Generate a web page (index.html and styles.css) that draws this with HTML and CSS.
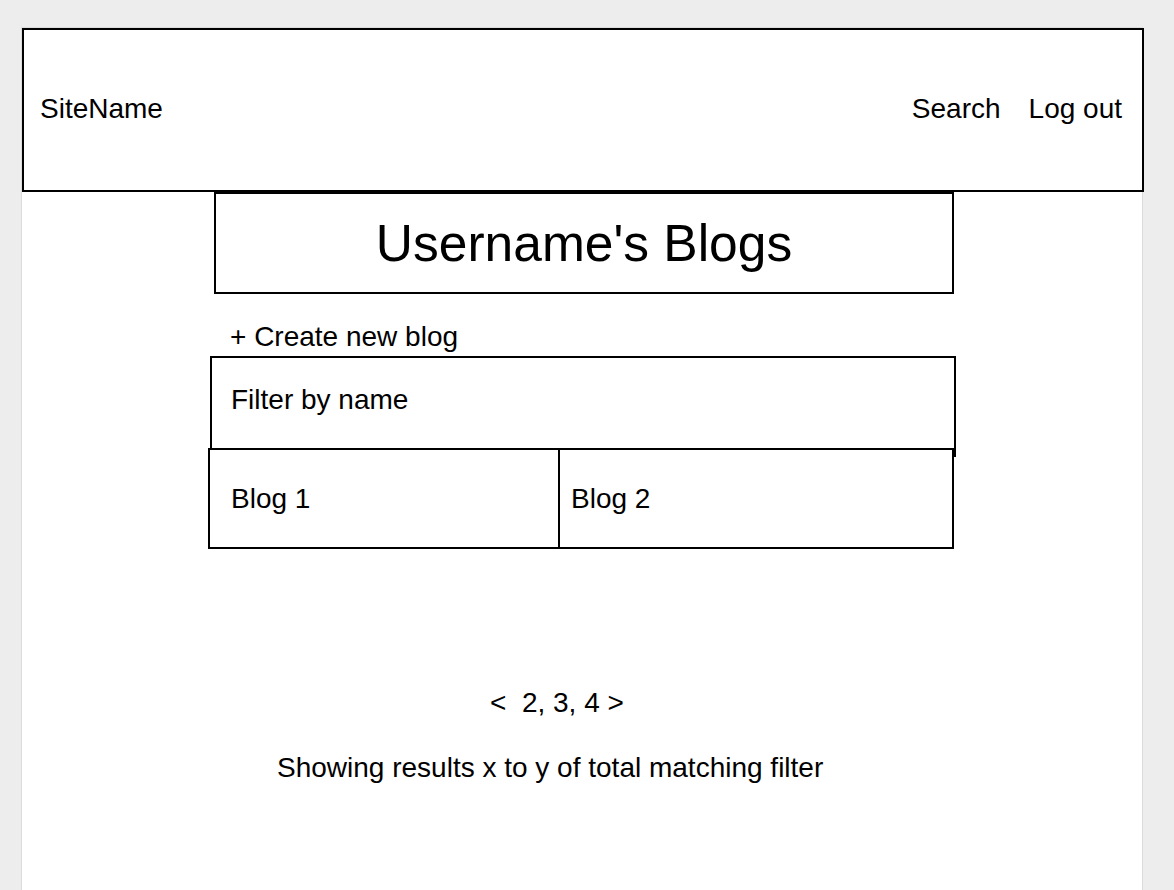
FILE: index.html
```html
<!DOCTYPE html>
<html lang="en">
<head>
<meta charset="utf-8">
<title>Username's Blogs</title>
<link rel="stylesheet" href="styles.css">
</head>
<body>
<div class="page">
  <header class="header">
    <div class="site-name">SiteName</div>
    <nav class="nav">
      <span class="nav-item">Search</span>
      <span class="nav-item">Log out</span>
    </nav>
  </header>
  <h1 class="title">Username's Blogs</h1>
  <div class="create">+ Create new blog</div>
  <div class="filter">Filter by name</div>
  <div class="blogs">
    <div class="blog blog-first">Blog 1</div>
    <div class="blog blog-second">Blog 2</div>
  </div>
  <div class="pager">&lt;&nbsp; 2, 3, 4 &gt;</div>
  <div class="summary">Showing results x to y of total matching filter</div>
</div>
</body>
</html>
```

FILE: styles.css
```css
* {
  box-sizing: border-box;
}

html, body {
  margin: 0;
  padding: 0;
  background: #ededed;
  height: 100%;
  overflow: hidden;
}

body {
  font-family: "Liberation Sans", Arial, Helvetica, sans-serif;
  font-size: 28px;
  line-height: 32px;
  color: #000;
}

.page {
  margin: 27px 0 0 21px;
  width: 1122px;
  min-height: 880px;
  background: #fff;
  border: 1px solid #dcdcdc;
  border-bottom: none;
}

.header {
  width: 1122px;
  height: 164px;
  border: 2px solid #000;
  display: flex;
  align-items: center;
  justify-content: space-between;
  padding: 0 20px 2px 16px;
}

.nav {
  display: flex;
  gap: 28px;
}

.title {
  margin: 0 0 0 192px;
  width: 740px;
  height: 102px;
  border: 2px solid #000;
  font-size: 51.5px;
  line-height: 60px;
  font-weight: normal;
  display: flex;
  align-items: center;
  justify-content: center;
}

.create {
  margin: 0 0 0 208px;
  padding-top: 27px;
  height: 62px;
}

.filter {
  margin-left: 188px;
  width: 746px;
  height: 101px;
  border: 2px solid #000;
  padding: 26px 0 0 19px;
}

.blogs {
  margin: -9px 0 0 186px;
  width: 746px;
  height: 101px;
  border: 2px solid #000;
  background: #fff;
  display: grid;
  grid-template-columns: 350px 1fr;
}

.blog {
  display: flex;
  align-items: center;
}

.blog-first {
  border-right: 2px solid #000;
  padding-left: 21px;
}

.blog-second {
  padding-left: 11px;
}

.pager {
  margin: 138px 0 0 468px;
}

.summary {
  margin: 33px 0 0 255px;
}
```
